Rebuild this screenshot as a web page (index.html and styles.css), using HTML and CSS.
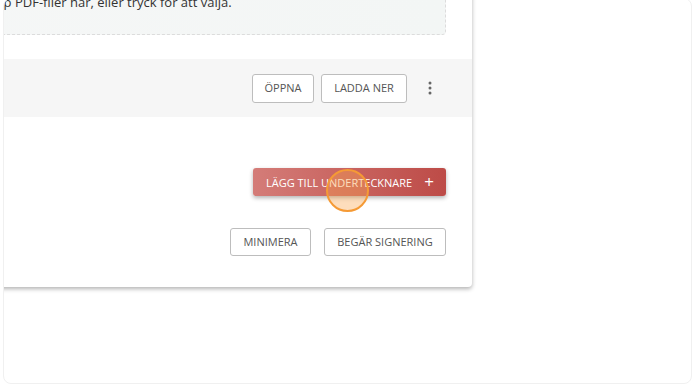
FILE: index.html
```html
<!DOCTYPE html>
<html lang="sv">
<head>
<meta charset="utf-8">
<title>Dokument</title>
<link rel="stylesheet" href="styles.css">
</head>
<body>
<div class="frame">
  <div class="card">
    <div class="dropzone">Släpp PDF-filer här, eller tryck för att välja.</div>
    <div class="band">
      <button class="btn btn-open">ÖPPNA</button>
      <button class="btn btn-download">LADDA NER</button>
      <button class="kebab" aria-label="Mer">
        <svg width="4" height="14" viewBox="0 0 4 14"><circle cx="2" cy="2" r="1.5"/><circle cx="2" cy="7" r="1.5"/><circle cx="2" cy="12" r="1.5"/></svg>
      </button>
    </div>
    <div class="add-row">
      <button class="btn-primary">LÄGG TILL UNDERTECKNARE <span class="plus">+</span></button>
      <span class="cursor-dot"></span>
    </div>
    <div class="bottom-row">
      <button class="btn btn-min">MINIMERA</button>
      <button class="btn btn-sign">BEGÄR SIGNERING</button>
    </div>
  </div>
</div>
</body>
</html>
```
FILE: styles.css
```css
* { box-sizing: border-box; }
html, body { margin: 0; padding: 0; background: #fff; }
body { font-family: "Open Sans", "Liberation Sans", sans-serif; color: #333; }

.frame {
  margin: -2px 0 0 3px;
  width: 689px;
  height: 386px;
  border: 1px solid #f0f0f0;
  border-radius: 8px;
  overflow: hidden;
  background: #fff;
}

.card {
  width: 720px;
  margin: -47px 0 0 -252px;
  padding: 20px 26px 31px 26px;
  background: #fff;
  border-radius: 4px;
  box-shadow: 0 2px 4px rgba(0,0,0,0.3);
  display: flex;
  flex-direction: column;
}

.dropzone {
  border: 1px dashed #dcdcdc;
  border-radius: 4px;
  background: linear-gradient(90deg, #f6f7f7, #f3f6f5);
  padding: 20px 0 23px 199px;
  font-size: 13px;
  line-height: 18px;
  color: #333;
}

.band {
  margin: 24px -26px 0 -26px;
  height: 58px;
  background: #f6f6f6;
  display: flex;
  align-items: center;
  justify-content: flex-end;
  padding-right: 30px;
  gap: 7px;
}

.btn {
  font-family: "Open Sans", "Liberation Sans", sans-serif;
  font-size: 11px;
  color: #555;
  background: #fff;
  border: 1px solid #bdbdbd;
  border-radius: 3px;
  height: 28px;
  padding: 0 12px;
  line-height: 26px;
  cursor: pointer;
}
.band .btn { height: 29px; }

.kebab {
  width: 24px;
  height: 28px;
  margin-left: 4px;
  border: 0;
  background: transparent;
  display: flex;
  align-items: center;
  justify-content: center;
  padding: 0;
}
.kebab svg { fill: #666; }

.add-row {
  position: relative;
  display: flex;
  justify-content: flex-end;
  margin-top: 51px;
}

.btn-primary {
  font-family: "Open Sans", "Liberation Sans", sans-serif;
  font-size: 11px;
  color: #fff;
  height: 28px;
  width: 193px;
  padding: 0 12px 0 13px;
  border: 0;
  border-radius: 3px;
  background: linear-gradient(90deg, #d47c78, #bd4b47);
  box-shadow: 0 2px 4px rgba(0,0,0,0.3);
  display: flex;
  align-items: center;
  justify-content: space-between;
}
.plus { font-size: 17px; font-weight: 400; line-height: 1; margin-top: -2px; }

.cursor-dot {
  position: absolute;
  left: 548px;
  top: 1px;
  width: 43px;
  height: 43px;
  border-radius: 50%;
  border: 2px solid #f59a35;
  background: rgba(250, 165, 80, 0.38);
}

.bottom-row {
  display: flex;
  justify-content: flex-end;
  gap: 13px;
  margin-top: 32px;
}
.btn-min { width: 81px; padding: 0; }
.btn-sign { width: 122px; padding: 0; }
.btn-open { width: 62px; padding: 0; }
.btn-download { width: 86px; padding: 0; }
```
